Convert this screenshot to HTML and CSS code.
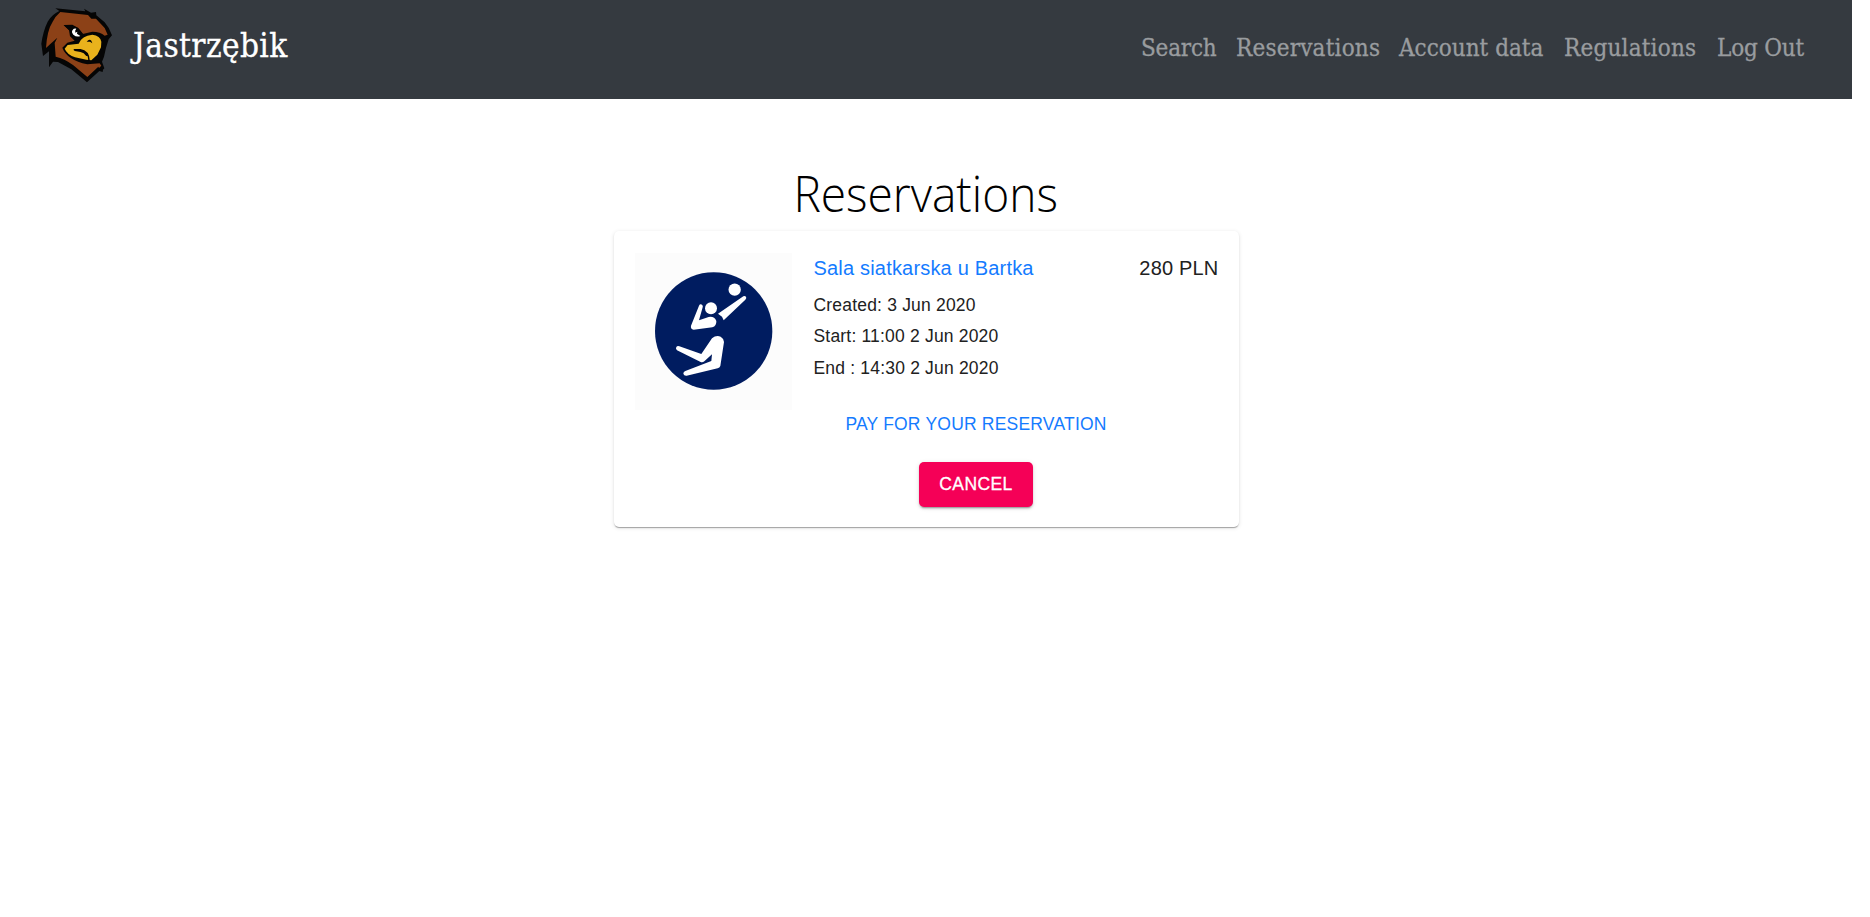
FILE: index.html
```html
<!DOCTYPE html>
<html lang="en">
<head>
<meta charset="utf-8">
<title>Reservations</title>
<link rel="stylesheet" href="styles.css">
</head>
<body>
<div class="page">
  <header class="navbar">
    <a class="brand">
      <svg class="logo" viewBox="0 0 300 300" aria-hidden="true">
        <path fill="#050505" d="M76 25 L166 34 L162 26 L183 38 L198 36 L199 46 L224 67 Q239 84 246 106 L236 118 Q227 144 222 170 L216 185 L223 205 L219 209 L218 216 L208 213 L171 247 L124 208 L84 186 L69 185 L57 202 L57 154 L39 168 L34 131 Q39 94 53 65 Q66 43 88 33 Z"/>
        <path fill="#8c4117" d="M91 36 L174 45 L184 56 L198 56 L224 84 L233 104 L224 107 Q211 95 187 95 L158 102 L145 84 L127 74 L101 75 L117 91 L120 109 L134 122 L112 128 L97 143 Q111 180 172 193 L209 190 L214 197 L207 204 L205 200 L172 231 L130 196 Q103 175 77 170 L74 129 L82 113 L61 132 L48 144 Q51 91 68 65 Q75 50 91 36 Z"/>
        <path fill="#e9b21c" d="M146 131 Q155 107 187 104 Q211 107 214 125 L213 142 L202 164 L184 181 L169 179 L135 172 Q111 163 104 146 L113 135 Z"/>
        <path fill="none" stroke="#050505" stroke-width="4.5" stroke-linecap="round" stroke-linejoin="round" d="M133 149 L151 149 Q176 153 177 181 M135 151 L152 154 Q164 156 170 166"/>
        <path fill="#050505" d="M170 125 Q178 115 184 122 L187 130 L180 125 Z"/>
        <path fill="#050505" d="M101 76 Q131 72 149 89 L165 109 L142 123 L124 108 L120 92 Z"/>
        <path fill="#fff" d="M128 90 Q131 85 139 86 Q134 91 136 98 L142 95 L141 101 L151 108 Q140 113 130 104 Q123 96 128 90 Z"/>
      </svg>
      <span class="brand-name">Jastrzębik</span>
    </a>
    <nav class="links">
      <a class="link search">Search</a>
      <a class="link reservations">Reservations</a>
      <a class="link account">Account data</a>
      <a class="link regulations">Regulations</a>
      <a class="link logout">Log Out</a>
    </nav>
  </header>
  <main class="content">
    <h1 class="heading">Reservations</h1>
    <section class="card">
      <svg class="thumb" viewBox="105 99 471 471" aria-hidden="true">
        <circle cx="341" cy="333" r="176" fill="#001c60"/>
        <g fill="#fff">
          <circle cx="404" cy="209" r="18.5"/>
          <circle cx="333" cy="265" r="18"/>
          <path d="M354 281 L430 229 Q438 226 439 234 L436 239 L371 301 L366 290 Z"/>
          <path d="M297 257 Q300 251 306 254 Q310 257 308 262 L297 301 L326 291 Q343 288 349 303 Q350 318 337 322 L281 329 Q271 327 273 317 Z"/>
          <path d="M336 355 Q348 345 362 350 Q371 355 372 366 L361 438 Q359 443 353 445 L260 467 Q252 468 250 461 Q250 455 256 453 L334 423 L336 403 L313 424 Q308 428 302 426 L231 391 Q226 387 229 381 Q232 377 238 379 L304 402 Z"/>
        </g>
      </svg>
      <div class="details">
        <a class="venue">Sala siatkarska u Bartka</a>
        <p class="meta">Created: 3 Jun 2020</p>
        <p class="meta">Start: 11:00 2 Jun 2020</p>
        <p class="meta">End : 14:30 2 Jun 2020</p>
        <div class="actions">
          <a class="pay">PAY FOR YOUR RESERVATION</a>
          <button class="cancel">CANCEL</button>
        </div>
      </div>
      <span class="price">280 PLN</span>
    </section>
  </main>
</div>
</body>
</html>
```
FILE: styles.css
```css
* { box-sizing: border-box; }
body { margin: 0; background: #fff; font-family: "Liberation Sans", Arial, sans-serif; color: #212121; }
.page { width: 1852px; min-height: 917px; }
.navbar {
  display: flex; justify-content: space-between; height: 99px;
  padding: 0 35px 0 30px; background: #353a40;
  font-family: "DejaVu Serif Condensed", "DejaVu Serif", serif; font-stretch: condensed;
  -webkit-text-stroke: .3px currentColor;
}
.brand { display: flex; color: #fff; }
.logo { width: 100px; height: 100px; flex: none; -webkit-text-stroke: 0; }
.brand-name { margin-left: 3px; font-size: 33px; line-height: 92px; letter-spacing: .4px; white-space: nowrap; }
.links { display: flex; font-size: 24px; line-height: 97px; color: #999c9f; }
.link { white-space: nowrap; }
.search { width: 95px; letter-spacing: -.2px; }
.reservations { width: 163px; letter-spacing: .2px; }
.account { width: 165px; }
.regulations { width: 153px; letter-spacing: .2px; }
.logout { width: 100px; letter-spacing: -.2px; }
.content { display: flex; flex-direction: column; align-items: center; padding-top: 64px; }
.heading {
  margin: 0; height: 68px; font-family: "Open Sans", "Noto Sans", sans-serif;
  font-weight: 300; font-size: 49px; line-height: 61px; color: #000; white-space: nowrap;
  transform: scaleX(.94);
}
.card {
  display: flex; width: 625px; height: 296px; padding: 22px 20px 20px 21px;
  border-radius: 5px; background: #fff;
  box-shadow: 0 2px 1px -1px rgba(0,0,0,.2), 0 1px 1px rgba(0,0,0,.14), 0 1px 4px rgba(0,0,0,.12);
}
.thumb { width: 157px; height: 157px; flex: none; background: #fcfcfc; }
.details { width: 325px; margin-left: 22px; }
.venue { display: block; height: 36.5px; font-size: 20px; line-height: 30px; letter-spacing: .188px; color: #147bff; white-space: nowrap; }
.meta { margin: 0; height: 31.5px; font-size: 17.5px; line-height: 31px; letter-spacing: .188px; white-space: nowrap; }
.actions { display: flex; flex-direction: column; align-items: center; padding-top: 24.5px; }
.pay { height: 53px; font-size: 17.5px; line-height: 30px; letter-spacing: .2px; color: #147bff; white-space: nowrap; }
.cancel {
  width: 114px; height: 45px; padding: 0; border: 0; border-radius: 5px;
  background: #f50057; color: #fff; font: 500 17.5px/44px "Liberation Sans", Arial, sans-serif; letter-spacing: .4px;
  -webkit-text-stroke: .3px #fff;
  box-shadow: 0 3px 1px -2px rgba(0,0,0,.2), 0 2px 2px rgba(0,0,0,.14), 0 1px 5px rgba(0,0,0,.12);
}
.price { margin-left: auto; font-size: 20px; line-height: 30px; letter-spacing: .188px; white-space: nowrap; }
```
